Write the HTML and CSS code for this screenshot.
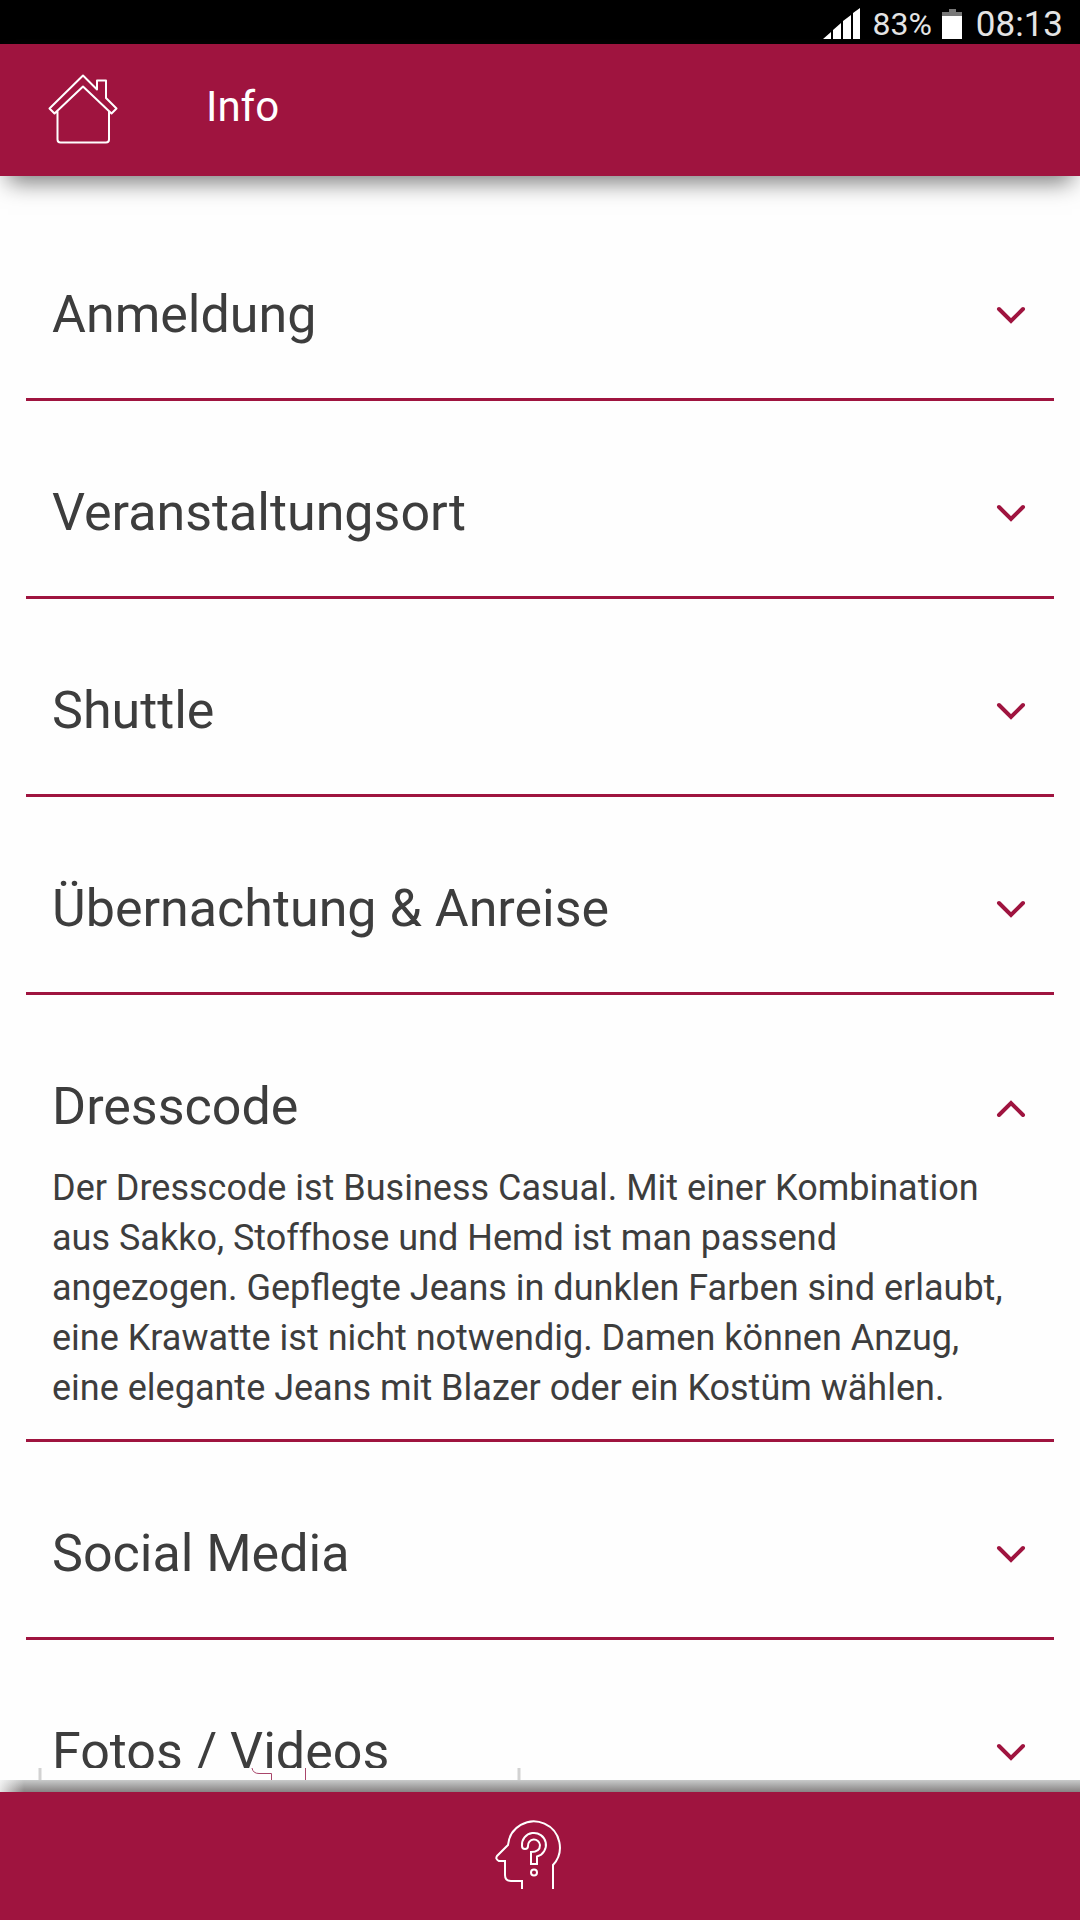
FILE: index.html
```html
<!DOCTYPE html>
<html lang="de">
<head>
<meta charset="utf-8">
<meta name="viewport" content="width=device-width, initial-scale=1">
<title>Info</title>
<link rel="stylesheet" href="styles.css">
</head>
<body>
<div class="statusbar">
  <svg class="signal" viewBox="0 0 38 32" aria-hidden="true"><path d="M0 31L8 24V31ZM10 22L18 15V31H10ZM20 13L28 7V31H20ZM30 5L37 0V31H30Z"/></svg>
  <span class="percent">83%</span>
  <svg class="battery" viewBox="0 0 20 30" aria-hidden="true"><path class="battery-empty" d="M7 0H14V3H20V7H0V3H7Z"/><path d="M0 7H20V30H0Z"/></svg>
  <span class="clock">08:13</span>
</div>
<header class="topbar">
  <a class="home" href="#" aria-label="Startseite">
    <svg viewBox="0 0 70 70" aria-hidden="true"><path d="M35 1.500L1.500 34.500L6.500 39.500L35 12.500L63.500 39.500L68.500 34.500L58 24V6.500H49V15.500ZM9.500 37V65.500Q9.500 68.500 12.500 68.500H58Q61 68.500 61 65.500V37"/></svg>
  </a>
  <h1 class="title">Info</h1>
</header>
<main class="content">
  <section class="item"><button class="toggle" aria-expanded="false">Anmeldung<svg class="chevron" viewBox="0 0 30 20"><path d="M3 4L15 16L27 4"/></svg></button></section>
  <section class="item"><button class="toggle" aria-expanded="false">Veranstaltungsort<svg class="chevron" viewBox="0 0 30 20"><path d="M3 4L15 16L27 4"/></svg></button></section>
  <section class="item"><button class="toggle" aria-expanded="false">Shuttle<svg class="chevron" viewBox="0 0 30 20"><path d="M3 4L15 16L27 4"/></svg></button></section>
  <section class="item"><button class="toggle" aria-expanded="false">Übernachtung &amp; Anreise<svg class="chevron" viewBox="0 0 30 20"><path d="M3 4L15 16L27 4"/></svg></button></section>
  <section class="item item-open"><button class="toggle" aria-expanded="true" aria-controls="dresscode">Dresscode<svg class="chevron" viewBox="0 0 30 20"><path d="M3 18L15 6L27 18"/></svg></button>
    <p class="text" id="dresscode">Der Dresscode ist Business Casual. Mit einer Kombination aus Sakko, Stoffhose und Hemd ist man passend angezogen. Gepflegte Jeans in dunklen Farben sind erlaubt, eine Krawatte ist nicht notwendig. Damen können Anzug, eine elegante Jeans mit Blazer oder ein Kostüm wählen.</p>
  </section>
  <section class="item"><button class="toggle" aria-expanded="false">Social Media<svg class="chevron" viewBox="0 0 30 20"><path d="M3 4L15 16L27 4"/></svg></button></section>
  <section class="item"><button class="toggle" aria-expanded="false">Fotos / Videos<svg class="chevron" viewBox="0 0 30 20"><path d="M3 4L15 16L27 4"/></svg></button></section>
</main>
<div class="underlay" aria-hidden="true">
  <svg viewBox="0 0 540 12"><path class="card-edge" d="M40 0V12M519 0V12"/><path class="card-icon" d="M252 0Q253 5.500 259 5.500H271.500V12M305.500 0V12"/></svg>
</div>
<div class="shade"></div>
<footer class="bottombar">
  <button class="help" aria-label="Hilfe">
    <svg viewBox="0 0 68 74" aria-hidden="true"><path d="M27 72V64H16Q10 64 10 58V44H4Q0 42 2 39L13 28A26 26 0 1 1 58 48V72"/><path d="M27 29A12 12 0 1 1 42 39.500V47H36V35Q45 35 45 28A6 6 0 0 0 33 29A3 3 0 0 1 27 29Z"/><circle cx="39" cy="55.500" r="3"/></svg>
  </button>
</footer>
</body>
</html>
```
FILE: styles.css
```css
* { box-sizing: border-box; }
body {
  margin: 0;
  height: 100vh;
  display: flex;
  flex-direction: column;
  overflow: hidden;
  background: #fefefe;
  color: #3d3d3d;
  font-family: Roboto, sans-serif;
}
button { border: 0; padding: 0; background: none; color: inherit; font: inherit; cursor: pointer; }
svg { display: block; flex: none; }

.statusbar {
  flex: none;
  height: 44px;
  padding: 4px 17px 0 0;
  display: flex;
  justify-content: flex-end;
  align-items: center;
  background: #000;
  color: #e4e4e4;
}
.signal { width: 38px; height: 32px; fill: #fff; }
.percent { margin-left: 11px; font-size: 32px; }
.battery { width: 20px; height: 30px; margin: 0 14px 0 10px; fill: #fff; }
.battery-empty { fill: #777; }
.clock { font-size: 35px; }

.topbar {
  flex: none;
  height: 132px;
  padding: 0 48px 2px;
  display: flex;
  align-items: center;
  gap: 88px;
  background: #9f143f;
  color: #fff;
  box-shadow: 0 14px 22px -8px #777;
}
.home svg { width: 70px; height: 70px; fill: none; stroke: #fff; stroke-width: 2; stroke-linejoin: round; }
.title { margin: 0; font-size: 42px; line-height: 50px; font-weight: 400; padding-bottom: 4px; }

.content { flex: 1; min-height: 0; overflow: hidden; padding: 27px 26px 0; }
.item { height: 198px; border-bottom: 3px solid #9f143f; padding: 76px 26px 0; }
.item-open { height: auto; padding-bottom: 6px; }
.toggle {
  width: 100%;
  height: 72px;
  padding-right: 2px;
  display: flex;
  justify-content: space-between;
  align-items: center;
  font-size: 52px;
  line-height: 72px;
  text-align: left;
}
.chevron { width: 30px; height: 20px; fill: none; stroke: #9f143f; stroke-width: 4; stroke-linecap: round; }
.text { margin: 20px 0; font-size: 36px; line-height: 50px; }

.underlay { flex: none; height: 12px; overflow: hidden; }
.underlay svg { width: 540px; height: 12px; fill: none; }
.card-edge { stroke: #d2d2d2; stroke-width: 3; }
.card-icon { stroke: #a8456a; stroke-width: 1; }
.shade {
  flex: none;
  height: 12px;
  background: linear-gradient(90deg, #fefefecc, #fefefe00 24px), linear-gradient(#c8caca, #878383);
}
.bottombar {
  flex: none;
  height: 128px;
  padding: 25px 0 0;
  display: flex;
  justify-content: center;
  align-items: flex-start;
  background: #9f143f;
}
.help { padding-right: 22px; }
.help svg { width: 68px; height: 74px; fill: none; stroke: #fff; stroke-width: 2; }
```
